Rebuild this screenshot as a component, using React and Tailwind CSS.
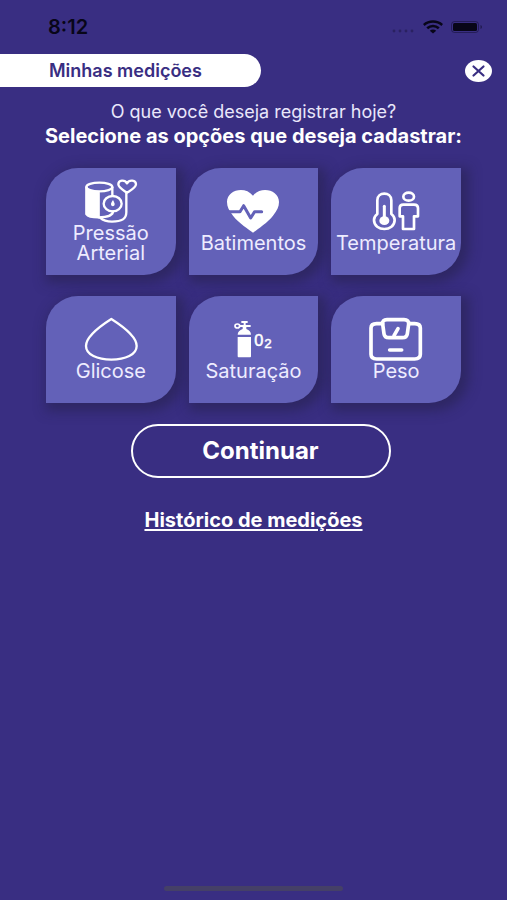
import { useState } from "react";

const OPTIONS = [
  { id: "pressao", label: "Pressão Arterial", Icon: PressureIcon },
  { id: "batimentos", label: "Batimentos", Icon: HeartIcon },
  { id: "temperatura", label: "Temperatura", Icon: TemperatureIcon },
  { id: "glicose", label: "Glicose", Icon: DropIcon },
  { id: "saturacao", label: "Saturação", Icon: OxygenIcon },
  { id: "peso", label: "Peso", Icon: ScaleIcon },
];

function PressureIcon(props) {
  return (
    <svg viewBox="144 54 162 135" fill="none" stroke="white" strokeWidth="7" strokeLinecap="round" strokeLinejoin="round" {...props}>
      <path d="M151 82v80c4 6 18 10 37 10v-74c-20 0-34-6-37-16z" fill="white" />
      <ellipse cx="190" cy="81" rx="39" ry="13" />
      <path d="M229 82v25" />
      <ellipse cx="230" cy="131" rx="27" ry="23" />
      <path d="M231 120c-4 6-6 9-6 13 0 8 11 8 11 0 0-4-2-7-5-13z" fill="white" stroke="none" />
      <path d="M188 172c26 0 43-4 43-18" />
      <path d="M192 173c10 9 22 12 36 12 30 0 43-8 43-28V99" />
      <path d="M273 98c-12-8-26-15-26-25 0-13 19-15 26-3 7-12 27-10 27 3 0 10-14 17-27 25z" />
    </svg>
  );
}

function HeartIcon(props) {
  return (
    <svg viewBox="141 84 162 135" fill="none" {...props}>
      <path
        d="M222 218c-10-8-44-30-60-51-12-15-18-27-18-41 0-36 53-50 78-19 25-31 78-17 78 19 0 14-6 26-18 41-16 21-50 43-60 51z"
        fill="white"
      />
      <path d="M150 155h33l11-18 21 37 12-19h21" stroke="#6361b8" strokeWidth="9" strokeLinecap="round" strokeLinejoin="round" />
    </svg>
  );
}

function TemperatureIcon(props) {
  return (
    <svg viewBox="138 84 162 135" fill="none" stroke="white" strokeWidth="8" strokeLinejoin="round" {...props}>
      <path d="M163 162v-41c0-27 42-27 42 0v41c7 5 10 10 10 18 0 36-62 36-62 0 0-8 3-13 10-18z" />
      <path d="M184 139v38" strokeWidth="9" strokeLinecap="round" />
      <ellipse cx="184" cy="182" rx="15" ry="13" fill="white" stroke="none" />
      <ellipse cx="257" cy="110" rx="16" ry="12" />
      <path d="M241 134h32c8 0 12 4 12 10v25h-12v38h-33v-38h-10v-25c0-6 4-10 11-10z" />
    </svg>
  );
}

function DropIcon(props) {
  return (
    <svg viewBox="144 84 162 135" fill="none" stroke="white" strokeWidth="7" strokeLinejoin="round" {...props}>
      <path d="M226 93c-33 21-76 53-76 81 0 26 34 41 76 41s76-15 76-41c0-28-43-60-76-81z" />
    </svg>
  );
}

function OxygenIcon(props) {
  return (
    <svg viewBox="141 84 162 135" fill="none" {...props}>
      <ellipse cx="175" cy="114" rx="7" ry="6" stroke="white" strokeWidth="5" />
      <path d="M182 114h33M187 102h19M197 102v20" stroke="white" strokeWidth="6" />
      <path d="M191 117h11v6c9 3 14 9 14 17h-40c0-8 6-14 15-17z" fill="white" />
      <path d="M176 147h40v57c0 3-1 4-4 4h-32c-3 0-4-1-4-4z" fill="white" />
      <text x="226" y="173" fontSize="49" fill="white" stroke="white" strokeWidth="1.500" className="font-['Liberation_Sans']">0</text>
      <text x="256" y="181" fontSize="40" fill="white" stroke="white" strokeWidth="1.500" className="font-['Liberation_Sans']">2</text>
    </svg>
  );
}

function ScaleIcon(props) {
  return (
    <svg viewBox="138 84 162 135" fill="none" stroke="white" strokeWidth="11" strokeLinecap="round" strokeLinejoin="round" {...props}>
      <path d="M179 107h-18c-11 0-17 5-17 13v79c0 9 6 14 17 14h114c11 0 17-5 17-14v-79c0-8-6-13-17-13h-18" />
      <path d="M192 95h51c10 0 15 5 14 13l-4 29c-1 8-6 12-15 12h-40c-9 0-14-4-15-12l-4-29c-1-8 3-13 13-13z" />
      <path d="M213 143l12-21M200 186h36" />
    </svg>
  );
}

function StatusBar() {
  return (
    <div className="flex h-[54px] items-center justify-between pl-12 pr-6 text-[#080618]">
      <span className="text-xl font-semibold leading-5">8:12</span>
      <div className="flex items-center gap-2">
        <svg className="mt-2 h-1 w-6 opacity-30" viewBox="0 0 24 4" fill="currentColor">
          <circle cx="3" cy="2" r="1.4" />
          <circle cx="9" cy="2" r="1.4" />
          <circle cx="15" cy="2" r="1.4" />
          <circle cx="21" cy="2" r="1.4" />
        </svg>
        <svg className="h-[14px] w-5" viewBox="0 0 20 14" fill="none" stroke="currentColor" strokeWidth="2.6">
          <path d="M.8 5C6 .4 14 .4 19.200 5" />
          <path d="M4.200 8.200c3.400-3 8.200-3 11.600 0" />
          <path d="M10 13.600L6.800 10.800c1.800-1.700 4.600-1.700 6.400 0z" fill="currentColor" stroke="none" />
        </svg>
        <svg className="h-3 w-8" viewBox="0 0 32 12" fill="currentColor">
          <rect x=".5" y=".5" width="27" height="11" rx="3" fill="none" stroke="currentColor" strokeOpacity=".4" />
          <rect x="2" y="2" width="24" height="8" rx="1.500" />
          <path d="M29.500 4v4c2-.8 2-3.200 0-4z" opacity=".5" />
        </svg>
      </div>
    </div>
  );
}

export default function App() {
  const [selected, setSelected] = useState([]);

  const toggle = (id) =>
    setSelected((s) => (s.includes(id) ? s.filter((x) => x !== id) : [...s, id]));

  return (
    <div className="flex min-h-screen flex-col bg-[#392e82] font-['Inter',sans-serif] text-white">
      <StatusBar />

      {/* Header */}
      <header className="flex items-center justify-between pr-[15px]">
        <h1 className="rounded-r-full bg-white py-1.5 pl-[49px] pr-[59px] text-lg font-semibold leading-[21px] text-[#392e82]">
          Minhas medições
        </h1>
        <button type="button" aria-label="Fechar">
          <svg className="h-[22px] w-[27px]" viewBox="0 0 27 22" fill="none">
            <ellipse cx="13.500" cy="11" rx="13.500" ry="11" fill="white" />
            <path d="M8.500 6.500l10 9M18.500 6.500l-10 9" stroke="#392e82" strokeWidth="2.200" strokeLinecap="round" />
          </svg>
        </button>
      </header>

      <main className="flex flex-col items-center">
        <p className="mt-[13px] text-lg leading-6 text-[#e9e7fb]">O que você deseja registrar hoje?</p>
        <h2 className="whitespace-nowrap text-xl font-bold leading-6">
          Selecione as opções que deseja cadastrar:
        </h2>

        {/* Measurement options */}
        <div className="mt-5 grid w-full grid-cols-3 gap-x-[13px] gap-y-[21px] px-[46px]">
          {OPTIONS.map(({ id, label, Icon }) => (
            <button
              key={id}
              type="button"
              aria-pressed={selected.includes(id)}
              onClick={() => toggle(id)}
              className="flex h-[107px] flex-col items-center justify-center rounded-tl-[32px] rounded-br-[32px] bg-[#6361b8] pb-0.5 text-xl leading-5 text-[#eeecff] shadow-[4px_4px_12px_4px_rgba(35,32,70,0.5)] aria-pressed:ring-2 aria-pressed:ring-white"
            >
              <Icon className="h-[45px] w-[54px] shrink-0" />
              <span>{label}</span>
            </button>
          ))}
        </div>

        <button
          type="button"
          className="mt-[21px] ml-3.5 h-[54px] w-[260px] rounded-full border-2 border-white text-2xl font-bold"
        >
          Continuar
        </button>
        <a href="#historico" className="mt-[30px] text-xl font-bold leading-6 underline underline-offset-2">
          Histórico de medições
        </a>
      </main>

      {/* Home indicator */}
      <div className="mx-auto mt-auto mb-[9px] h-[5px] w-[179px] rounded-full bg-[#454067]" />
    </div>
  );
}
